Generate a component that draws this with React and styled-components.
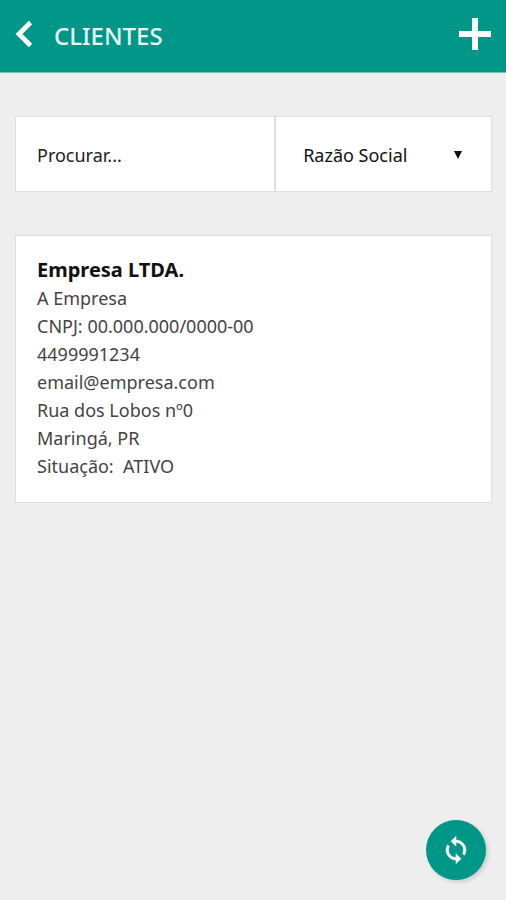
import React, { useState } from 'react'
import styled, { createGlobalStyle } from 'styled-components'

const clients = [
  {
    id: 1,
    razaoSocial: 'Empresa LTDA.',
    nomeFantasia: 'A Empresa',
    cnpj: '00.000.000/0000-00',
    telefone: '4499991234',
    email: 'email@empresa.com',
    endereco: 'Rua dos Lobos nº0',
    cidade: 'Maringá, PR',
    situacao: 'ATIVO',
  },
]

const App = () => {
  const [search, setSearch] = useState('')
  const [field, setField] = useState('razaoSocial')

  const filtered = clients.filter((client) =>
    client[field].toLowerCase().includes(search.toLowerCase())
  )

  return (
    <Page>
      <GlobalStyle />
      <Header>
        <IconButton aria-label="Voltar">
          <svg width="18" height="28" viewBox="0 0 18 28">
            <path d="M15.5 2.5L4 14l11.5 11.5" fill="none" stroke="#fff" strokeWidth="4.8" />
          </svg>
        </IconButton>
        <Title>CLIENTES</Title>
        <IconButton aria-label="Adicionar cliente">
          <svg width="32" height="32" viewBox="0 0 32 32">
            <path d="M16 0v32M0 16h32" fill="none" stroke="#fff" strokeWidth="6" />
          </svg>
        </IconButton>
      </Header>
      <Content>
        <SearchBar>
          <SearchInput
            type="text"
            aria-label="Procurar"
            placeholder="Procurar..."
            value={search}
            onChange={(e) => setSearch(e.target.value)}
          />
          <SelectBox>
            <Select
              aria-label="Filtrar por"
              value={field}
              onChange={(e) => setField(e.target.value)}
            >
              <option value="razaoSocial">Razão Social</option>
              <option value="nomeFantasia">Nome Fantasia</option>
              <option value="cnpj">CNPJ</option>
            </Select>
            <Caret width="8" height="8" viewBox="0 0 8 8">
              <path d="M0 0h8L4 8z" fill="#111" />
            </Caret>
          </SelectBox>
        </SearchBar>
        {filtered.map((client) => (
          <ClientCard key={client.id}>
            <ClientName>{client.razaoSocial}</ClientName>
            <ClientInfo>{client.nomeFantasia}</ClientInfo>
            <ClientInfo>CNPJ: {client.cnpj}</ClientInfo>
            <ClientInfo>{client.telefone}</ClientInfo>
            <ClientInfo>{client.email}</ClientInfo>
            <ClientInfo>{client.endereco}</ClientInfo>
            <ClientInfo>{client.cidade}</ClientInfo>
            <ClientInfo>Situação:&nbsp; {client.situacao}</ClientInfo>
          </ClientCard>
        ))}
      </Content>
      <SyncButton aria-label="Sincronizar">
        <svg width="30" height="30" viewBox="0 0 24 24">
          <path
            d="M12 4V1L8 5l4 4V6c3.31 0 6 2.69 6 6 0 1.01-.25 1.97-.7 2.8l1.46 1.46A7.93 7.93 0 0 0 20 12c0-4.42-3.58-8-8-8zm0 14c-3.31 0-6-2.69-6-6 0-1.01.25-1.97.7-2.8L5.24 7.74A7.93 7.93 0 0 0 4 12c0 4.42 3.58 8 8 8v3l4-4-4-4v3z"
            fill="#fff"
            stroke="#fff"
            strokeWidth="0.4"
          />
        </svg>
      </SyncButton>
    </Page>
  )
}

export default App

const GlobalStyle = createGlobalStyle`
  * {
    box-sizing: border-box;
  }

  body {
    margin: 0;
    background: #eeeeee;
  }

  body, button, input, select {
    font-family: "Noto Sans", "Open Sans", sans-serif;
  }
`

const Page = styled.div`
  min-height: 100vh;
`

const Header = styled.header`
  display: flex;
  align-items: center;
  height: 73px;
  padding: 0 15px;
  background: #009688;
  border-bottom: 1px solid #7fbdb6;
`

const IconButton = styled.button`
  display: flex;
  padding: 0 0 4px;
  border: 0;
  background: none;
  cursor: pointer;
`

const Title = styled.h1`
  flex: 1;
  margin: 0;
  padding-left: 21px;
  color: #e6f8f5;
  font-size: 24px;
  font-weight: 500;
  line-height: 32px;
`

const Content = styled.main`
  display: flex;
  flex-direction: column;
  gap: 43px;
  padding: 43px 14px 43px 15px;
`

const SearchBar = styled.div`
  display: grid;
  grid-template-columns: 6fr 5fr;
`

const SearchInput = styled.input`
  width: 100%;
  min-width: 0;
  height: 76px;
  padding: 2px 21px 0;
  border: 1px solid #dedede;
  border-radius: 0;
  background: #fff;
  color: #222;
  font-size: 18px;
  outline: none;

  &::placeholder {
    color: #222;
    opacity: 1;
  }
`

const SelectBox = styled.div`
  position: relative;
  min-width: 0;
`

const Select = styled.select`
  width: 100%;
  height: 76px;
  padding: 2px 48px 0 27px;
  border: 1px solid #dedede;
  border-radius: 0;
  background: #fff;
  color: #111;
  font-size: 18px;
  appearance: none;
  outline: none;
`

const Caret = styled.svg`
  position: absolute;
  top: 35px;
  right: 30px;
  pointer-events: none;
`

const ClientCard = styled.article`
  padding: 20px 21px 22px;
  border: 1px solid #dedede;
  background: #fff;
`

const ClientName = styled.h2`
  margin: 0;
  color: #111;
  font-size: 20px;
  font-weight: 700;
  line-height: 28px;
`

const ClientInfo = styled.p`
  margin: 0;
  color: #444;
  font-size: 18px;
  line-height: 28px;
`

const SyncButton = styled.button`
  position: fixed;
  right: 20px;
  bottom: 20px;
  display: flex;
  align-items: center;
  justify-content: center;
  width: 60px;
  height: 60px;
  padding: 0;
  border: 0;
  border-radius: 50%;
  background: #009688;
  box-shadow: 2px 2px 4px rgba(0, 0, 0, 0.15);
  cursor: pointer;
`
